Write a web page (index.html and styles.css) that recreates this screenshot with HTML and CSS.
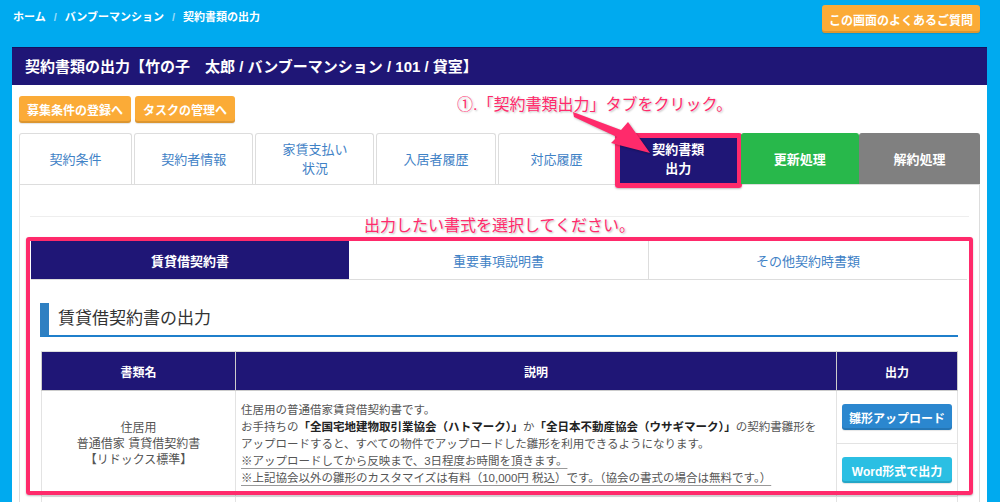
FILE: index.html
```html
<!DOCTYPE html>
<html lang="ja">
<head>
    <meta charset="UTF-8">
    <meta name="viewport" content="width=device-width, initial-scale=1.0">
    <title>契約書類の出力</title>
    <link rel="stylesheet" href="styles.css">
</head>
<body>
    <div class="topbar">
        <div class="breadcrumb">
            <a href="#">ホーム</a><span class="sep">/</span><a href="#">バンブーマンション</a><span class="sep">/</span><span class="current">契約書類の出力</span>
        </div>
        <a href="#" class="btn btn-orange faq">この画面のよくあるご質問</a>
    </div>

    <div class="panel">
        <div class="panel-heading">契約書類の出力【竹の子　太郎 / バンブーマンション / 101 / 貸室】</div>
        <div class="panel-body">
            <div class="actions">
                <a href="#" class="btn btn-orange">募集条件の登録へ</a>
                <a href="#" class="btn btn-orange">タスクの管理へ</a>
            </div>

            <ul class="nav-tabs">
                <li class="tab w1"><a href="#">契約条件</a></li>
                <li class="tab"><a href="#">契約者情報</a></li>
                <li class="tab"><a href="#">家賃支払い<br>状況</a></li>
                <li class="tab"><a href="#">入居者履歴</a></li>
                <li class="tab w5"><a href="#">対応履歴</a></li>
                <li class="tab w6 active"><a href="#">契約書類<br>出力</a></li>
                <li class="tab w5 renew"><a href="#">更新処理</a></li>
                <li class="tab cancel"><a href="#">解約処理</a></li>
            </ul>

            <div class="tab-pane">
                <hr class="divider">
                <p class="note">出力したい書式を選択してください。</p>

                <div class="doc-tabs">
                    <a href="#" class="doc-tab first active">賃貸借契約書</a>
                    <a href="#" class="doc-tab second">重要事項説明書</a>
                    <a href="#" class="doc-tab third">その他契約時書類</a>
                </div>

                <div class="doc-body">
                    <h3 class="section-title">賃貸借契約書の出力</h3>

                    <table class="doc-table">
                        <thead>
                            <tr>
                                <th class="col-name">書類名</th>
                                <th class="col-desc">説明</th>
                                <th class="col-out">出力</th>
                            </tr>
                        </thead>
                        <tbody>
                            <tr>
                                <td class="name">住居用<br>普通借家 賃貸借契約書<br>【リドックス標準】</td>
                                <td class="desc">
                                    <div>住居用の普通借家賃貸借契約書です。</div>
                                    <div>お手持ちの<b>「全国宅地建物取引業協会（ハトマーク）」</b>か<b>「全日本不動産協会（ウサギマーク）」</b>の契約書雛形を</div>
                                    <div>アップロードすると、すべての物件でアップロードした雛形を利用できるようになります。</div>
                                    <div><u>※アップロードしてから反映まで、3日程度お時間を頂きます。</u></div>
                                    <div><u>※上記協会以外の雛形のカスタマイズは有料（10,000円 税込）です。（協会の書式の場合は無料です。）</u></div>
                                </td>
                                <td class="out">
                                    <div class="out-row"><a href="#" class="btn btn-blue">雛形アップロード</a></div>
                                    <div class="out-row"><a href="#" class="btn btn-cyan">Word形式で出力</a></div>
                                </td>
                            </tr>
                            <tr class="next-row">
                                <td></td>
                                <td></td>
                                <td></td>
                            </tr>
                        </tbody>
                    </table>
                </div>

                <div class="highlight"></div>
            </div>
        </div>

        <div class="callout">①.「契約書類出力」タブをクリック。</div>
        <svg class="arrow" width="100" height="60" viewBox="0 0 100 60">
            <polygon points="13,12 61,30 68,22 90,53 51,43 57,37 14,17" />
        </svg>
    </div>
</body>
</html>
```

FILE: styles.css
```css
body {
    margin: 0;
    background-color: #00aaef;
    font-family: "Liberation Sans", "Noto Sans CJK JP", sans-serif;
    font-size: 12px;
    color: #555;
}
a {
    text-decoration: none;
}

/* top bar */
.topbar {
    height: 47px;
    display: flex;
    justify-content: space-between;
    align-items: flex-start;
    padding: 0 20px 0 13px;
}
.breadcrumb {
    padding-top: 9px;
    line-height: 16px;
    font-size: 11px;
    font-weight: bold;
    color: #fff;
}
.breadcrumb a {
    color: #fff;
}
.breadcrumb .sep {
    color: rgba(255, 255, 255, 0.6);
    margin: 0 8px;
}
.btn {
    display: inline-flex;
    align-items: center;
    justify-content: center;
    color: #fff;
    font-weight: bold;
    font-size: 12px;
    border-radius: 3px;
    box-shadow: inset 0 -2px 0 rgba(0, 0, 0, 0.12), 0 1px 1px rgba(0, 0, 0, 0.1);
}
.btn-orange {
    background-color: #fbab37;
    height: 27px;
    padding: 0 8px;
}
.faq {
    margin-top: 5px;
    height: 28px;
    width: 158px;
    padding: 0;
}

/* panel */
.panel {
    position: relative;
    margin: 0 13px 0 12px;
    background-color: #fff;
}
.panel-heading {
    height: 37px;
    line-height: 38px;
    background-color: #1f1676;
    border-top: 1px solid #150f5c;
    color: #fff;
    font-size: 15px;
    font-weight: bold;
    padding-left: 13px;
}
.panel-body {
    padding: 11px 7px 0;
}
.actions {
    display: flex;
    gap: 4px;
}

/* main tabs */
.nav-tabs {
    list-style: none;
    margin: 10px 0 0;
    padding: 0;
    display: flex;
    gap: 2px;
    border-bottom: 1px solid #ddd;
}
.tab {
    position: relative;
    width: 119px;
    height: 50px;
    border: 1px solid #ddd;
    border-bottom: none;
    border-radius: 3px 3px 0 0;
}
.tab.w1 { width: 113px; }
.tab.w5 { width: 118px; }
.tab.w6 { width: 121px; }
.tab a {
    display: flex;
    height: 100%;
    align-items: center;
    justify-content: center;
    text-align: center;
    font-size: 13px;
    line-height: 19px;
    color: #3f82c6;
}
.tab.active {
    background-color: #1f1676;
    border-color: #1f1676;
}
.tab.active a {
    color: #fff;
    font-weight: bold;
}
.tab.active::after {
    content: "";
    position: absolute;
    top: -1px;
    left: -4px;
    right: -4px;
    bottom: -4px;
    border: 5px solid #ff2a6b;
    border-radius: 3px;
    box-shadow: 0 1px 2px rgba(0, 0, 0, 0.25);
}
.tab.renew {
    background-color: #28b84b;
    border-color: #28b84b;
}
.tab.cancel {
    width: 121px;
    margin-left: -2px;
    background-color: #808080;
    border-color: #808080;
}
.tab.renew a,
.tab.cancel a {
    color: #fff;
    font-weight: bold;
}

/* tab content */
.tab-pane {
    position: relative;
    border-left: 1px solid #ddd;
    border-right: 1px solid #ddd;
    padding: 31px 10px 0;
}
.divider {
    margin: 0;
    border: none;
    border-top: 1px solid #eee;
}
.note {
    margin: 0;
    height: 20px;
    line-height: 18px;
    text-align: center;
    font-size: 16px;
    color: #ff2a6b;
    text-shadow: 0 0 2px #fff, 1px 1px 2px rgba(0, 0, 0, 0.3);
}

/* document tabs */
.doc-tabs {
    display: flex;
    margin: 4px 2px 0 1px;
    border-bottom: 1px solid #ddd;
}
.doc-tab {
    height: 38px;
    display: flex;
    align-items: center;
    justify-content: center;
    font-size: 13px;
    color: #3f82c6;
}
.doc-tab.first {
    width: 318px;
}
.doc-tab.second {
    width: 299px;
    border-right: 1px solid #ddd;
}
.doc-tab.third {
    flex: 1;
}
.doc-tab.active {
    background-color: #1f1676;
    color: #fff;
    font-weight: bold;
}

.doc-body {
    padding: 0 11px 0 10px;
}
.section-title {
    margin: 23px 0 0;
    height: 32px;
    line-height: 32px;
    border-left: 9px solid #2f80c2;
    border-bottom: 2px solid #1f7fcb;
    padding-left: 9px;
    font-size: 17px;
    font-weight: normal;
    color: #333;
}

/* table */
.doc-table {
    margin: 14px 0 0 1px;
    width: 917px;
    border-collapse: collapse;
    table-layout: fixed;
}
.doc-table th {
    height: 38px;
    padding: 0;
    background-color: #1f1676;
    color: #fff;
    font-weight: bold;
    font-size: 12px;
    border: 1px solid #ccc;
    border-top-color: #ddd;
}
.col-name { width: 193px; }
.col-desc { width: 600px; }
.doc-table td {
    border: 1px solid #e3e3e3;
    vertical-align: middle;
}
.doc-table td.name {
    text-align: center;
    line-height: 16px;
    color: #555;
}
.doc-table td.desc {
    padding: 10px 5px 9px;
    line-height: 17px;
    font-size: 11.5px;
    white-space: nowrap;
    overflow: hidden;
    color: #555;
}
.desc b {
    color: #222;
}
.desc u {
    text-decoration-color: #999;
    text-underline-offset: 3px;
}
.doc-table td.out {
    padding: 0;
}
.out-row {
    height: 52px;
    display: flex;
    align-items: center;
    justify-content: center;
}
.out-row + .out-row {
    border-top: 1px solid #e3e3e3;
}
.btn-blue,
.btn-cyan {
    width: 110px;
    height: 26px;
}
.btn-blue {
    background-color: #2b87cf;
}
.btn-cyan {
    background-color: #2bbfe3;
}
.next-row td {
    height: 60px;
}

/* annotations */
.highlight {
    position: absolute;
    left: 6px;
    top: 52px;
    width: 939px;
    height: 250px;
    border: 4px solid #ff2a6b;
    border-radius: 3px;
    box-shadow: 0 1px 2px rgba(0, 0, 0, 0.25);
}
.callout {
    position: absolute;
    left: 445px;
    top: 49px;
    line-height: 18px;
    font-size: 16px;
    color: #ff2a6b;
    text-shadow: 0 0 2px #fff, 1px 1px 2px rgba(0, 0, 0, 0.3);
}
.arrow {
    position: absolute;
    left: 548px;
    top: 53px;
    fill: #ff2a6b;
    filter: drop-shadow(1px 1px 1px rgba(0, 0, 0, 0.3));
}
```
